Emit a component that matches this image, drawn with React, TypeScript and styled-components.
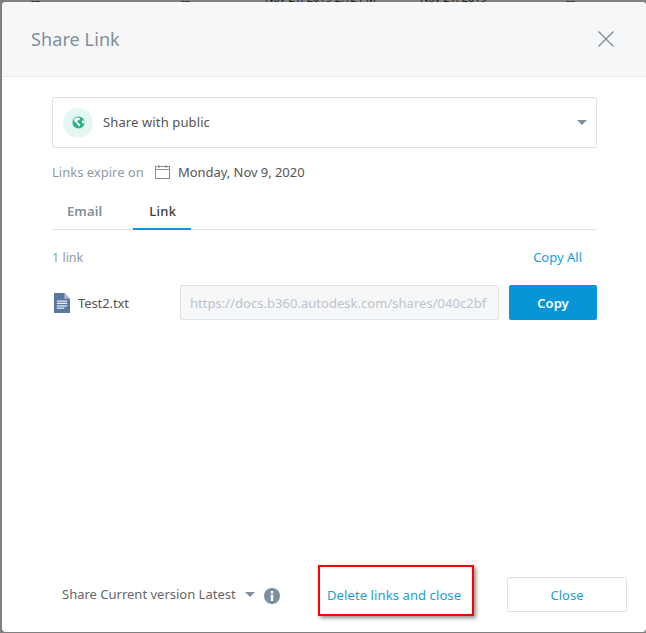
import React from "react";
import styled, { createGlobalStyle } from "styled-components";

const Global = createGlobalStyle`
  html, body { margin: 0; padding: 0; background: #808080; }
  * { box-sizing: border-box; }
  body { font-family: "Noto Sans", "Liberation Sans", sans-serif; }
`;

const Page = styled.div`
  width: 646px;
  height: 633px;
  overflow: hidden;
  background: #808080;
  display: flex;
  flex-direction: column;
`;

const BackdropStrip = styled.div`
  height: 2px;
  flex: none;
  overflow: hidden;
  display: flex;
  font-size: 11px;
  line-height: 2px;
  color: #222;
  white-space: nowrap;
`;

const BackdropCell = styled.span<{ $width: number; $dash?: boolean }>`
  width: ${(p) => p.$width}px;
  flex: none;
  font-weight: ${(p) => (p.$dash ? 700 : 400)};
  font-size: ${(p) => (p.$dash ? "14px" : "11px")};
  transform: translateY(${(p) => (p.$dash ? "0" : "-3px")});
`;

const Modal = styled.div`
  width: 644px;
  height: 630px;
  margin-left: 2px;
  background: #fff;
  border-radius: 4px;
  display: flex;
  flex-direction: column;
  overflow: hidden;
`;

const Header = styled.header`
  height: 75px;
  flex: none;
  background: #f5f7f9;
  border-bottom: 1px solid #e6ebef;
  display: flex;
  align-items: center;
  justify-content: space-between;
  padding: 0 32px 0 29px;
`;

const Title = styled.h2`
  margin: 0;
  font-size: 18px;
  font-weight: 400;
  color: #808f9b;
  letter-spacing: 0.1px;
`;

const CloseIcon = styled.button`
  width: 16px;
  height: 16px;
  padding: 0;
  border: 0;
  background: none;
  display: flex;
`;

const Body = styled.main`
  flex: 1;
  padding: 20px 49px 0 50px;
  display: flex;
  flex-direction: column;
`;

const SelectBox = styled.div`
  height: 51px;
  border: 1px solid #dfe3e6;
  border-radius: 2px;
  display: flex;
  align-items: center;
  padding: 0 9px 0 10px;
  gap: 10px;
`;

const GlobeBadge = styled.span`
  width: 30px;
  height: 30px;
  border-radius: 50%;
  background: #e5f7f1;
  display: flex;
  align-items: center;
  justify-content: center;
`;

const SelectText = styled.span`
  flex: 1;
  font-size: 13px;
  color: #555;
  letter-spacing: 0.12px;
  padding-bottom: 2px;
`;

const Caret = styled.span`
  width: 0;
  height: 0;
  border-left: 5px solid transparent;
  border-right: 5px solid transparent;
  border-top: 5px solid #7f8f9b;
`;

const ExpireRow = styled.div`
  display: flex;
  align-items: center;
  height: 20px;
  margin-top: 14px;
`;

const ExpireLabel = styled.span`
  font-size: 13px;
  color: #8d9ba6;
  width: 103px;
`;

const ExpireDate = styled.span`
  font-size: 13px;
  color: #555;
  margin-left: 8px;
  letter-spacing: -0.05px;
`;

const Tabs = styled.nav`
  display: flex;
  height: 39px;
  margin-top: 9px;
  border-bottom: 1px solid #dfe3e8;
  padding-left: 15px;
`;

const Tab = styled.div<{ $active?: boolean }>`
  font-size: 13px;
  font-weight: ${(p) => (p.$active ? 500 : 600)};
  color: ${(p) => (p.$active ? "#3c3c3c" : "#7f8f9b")};
  height: 39px;
  padding-top: 11px;
  margin-right: ${(p) => (p.$active ? 0 : "31px")};
  letter-spacing: ${(p) => (p.$active ? "0.3px" : "0.1px")};
  ${(p) => (p.$active ? "padding-left: 16px; padding-right: 15px; border-bottom: 2px solid #0696d7;" : "")}
`;

const CountRow = styled.div`
  display: flex;
  justify-content: space-between;
  align-items: center;
  height: 20px;
  margin-top: 17px;
  padding-right: 15px;
`;

const Count = styled.span`
  font-size: 12.5px;
  color: #8d9ba6;
`;

const LinkText = styled.a<{ $spaced?: boolean }>`
  font-size: 13px;
  color: #1a9edb;
  letter-spacing: ${(p) => (p.$spaced ? "0.1px" : "0")};
`;

const FileRow = styled.div`
  display: flex;
  align-items: center;
  margin-top: 18px;
  height: 35px;
  padding-left: 2px;
`;

const FileName = styled.span`
  font-size: 13px;
  color: #555;
  margin-left: 8px;
  width: 102px;
  letter-spacing: -0.1px;
`;

const UrlInput = styled.div`
  width: 319px;
  height: 35px;
  border: 1px solid #dfe3e8;
  border-radius: 2px;
  background: #f5f7f9;
  color: #bcc3c9;
  font-size: 13px;
  letter-spacing: 0.03px;
  display: flex;
  align-items: center;
  padding: 0 9px;
  overflow: hidden;
  white-space: nowrap;
`;

const CopyButton = styled.button`
  width: 88px;
  height: 35px;
  margin-left: 10px;
  border: 0;
  border-radius: 2px;
  background: #0696d7;
  color: #fff;
  font: 600 13px "Noto Sans", sans-serif;
`;

const Footer = styled.footer`
  flex: none;
  height: 56px;
  display: flex;
  align-items: flex-start;
  padding-left: 60px;
`;

const VersionBox = styled.div`
  display: flex;
  align-items: center;
  height: 36px;
  width: 254px;
`;

const VersionText = styled.span`
  font-size: 13px;
  color: #666;
  margin-right: 9px;
`;

const InfoIcon = styled.span`
  margin: 4px 0 0 9px;
  display: flex;
`;

const Highlight = styled.div`
  width: 156px;
  height: 51px;
  margin-top: -11px;
  margin-left: 2px;
  border: 2px solid #f00;
  box-shadow: 2px 2px 4px rgba(0, 0, 0, 0.45);
  background: #fff;
  padding: 16px 0 0 7px;
`;

const CloseButton = styled.button`
  width: 120px;
  height: 35px;
  margin: 1px 0 0 33px;
  border: 1px solid #dfe3e8;
  border-radius: 2px;
  background: #fff;
  color: #1a9edb;
  font: 400 13px "Noto Sans", sans-serif;
`;

const Cross = () => (
  <svg width="16" height="16" viewBox="0 0 16 16" fill="none" stroke="#7f8f9b" strokeWidth="1.4">
    <path d="M.5.5l15 15M15.500.5l-15 15" />
  </svg>
);

const Globe = () => (
  <svg width="13" height="13" viewBox="0 0 13 13">
    <circle cx="6.500" cy="6.500" r="6" fill="#2bb28a" />
    <path d="M3.200 2.200l3-.8 2 1.200-1 1.600-1.600.2-.5 1.500 1.800 1.300 1.300 1.500-1 2-1.300-1.800-1.500-1.800L2.500 5.500 2 4zM9.500 5l1.800-.8 1 2.300-1.500 1.300z" fill="#fff" />
  </svg>
);

const Calendar = () => (
  <svg width="15" height="14" viewBox="0 0 15 14" fill="none" stroke="#7f8f9b" strokeWidth="1">
    <rect x=".5" y="1.500" width="14" height="12" />
    <path d="M.5 4.500h14M4 0v3M11 0v3" />
  </svg>
);

const FileIcon = () => (
  <svg width="16" height="20" viewBox="0 0 17 21">
    <path d="M0 0h11l6 6v15H0z" fill="#58789e" />
    <path d="M11 0l6 6h-6z" fill="#a9bccf" />
    <path d="M3 8.500h11M3 11h11M3 13.500h11M3 16h8" stroke="#e8eef3" strokeWidth="1.300" />
  </svg>
);

const Info = () => (
  <svg width="16" height="16" viewBox="0 0 16 16">
    <circle cx="8" cy="8" r="8" fill="#7f8f9b" />
    <rect x="6.800" y="3" width="2.400" height="2.400" fill="#fff" />
    <rect x="6.800" y="6.500" width="2.400" height="6.500" fill="#fff" />
  </svg>
);

export default function App() {
  return (
    <Page>
      <Global />
      <BackdropStrip aria-hidden>
        <BackdropCell $width={31} />
        <BackdropCell $width={150} $dash>--</BackdropCell>
        <BackdropCell $width={84} $dash>--</BackdropCell>
        <BackdropCell $width={155}>Nov 21, 2019 2:12 PM</BackdropCell>
        <BackdropCell $width={146}>Nov 21, 2019</BackdropCell>
        <BackdropCell $width={50} $dash>--</BackdropCell>
      </BackdropStrip>
      <Modal>
        <Header>
          <Title>Share Link</Title>
          <CloseIcon aria-label="Close"><Cross /></CloseIcon>
        </Header>
        <Body>
          <SelectBox>
            <GlobeBadge><Globe /></GlobeBadge>
            <SelectText>Share with public</SelectText>
            <Caret />
          </SelectBox>
          <ExpireRow>
            <ExpireLabel>Links expire on</ExpireLabel>
            <Calendar />
            <ExpireDate>Monday, Nov 9, 2020</ExpireDate>
          </ExpireRow>
          <Tabs>
            <Tab>Email</Tab>
            <Tab $active>Link</Tab>
          </Tabs>
          <CountRow>
            <Count>1 link</Count>
            <LinkText>Copy All</LinkText>
          </CountRow>
          <FileRow>
            <FileIcon />
            <FileName>Test2.txt</FileName>
            <UrlInput>https://docs.b360.autodesk.com/shares/040c2bf</UrlInput>
            <CopyButton>Copy</CopyButton>
          </FileRow>
        </Body>
        <Footer>
          <VersionBox>
            <VersionText>Share Current version Latest</VersionText>
            <Caret />
            <InfoIcon><Info /></InfoIcon>
          </VersionBox>
          <Highlight><LinkText $spaced>Delete links and close</LinkText></Highlight>
          <CloseButton>Close</CloseButton>
        </Footer>
      </Modal>
    </Page>
  );
}
